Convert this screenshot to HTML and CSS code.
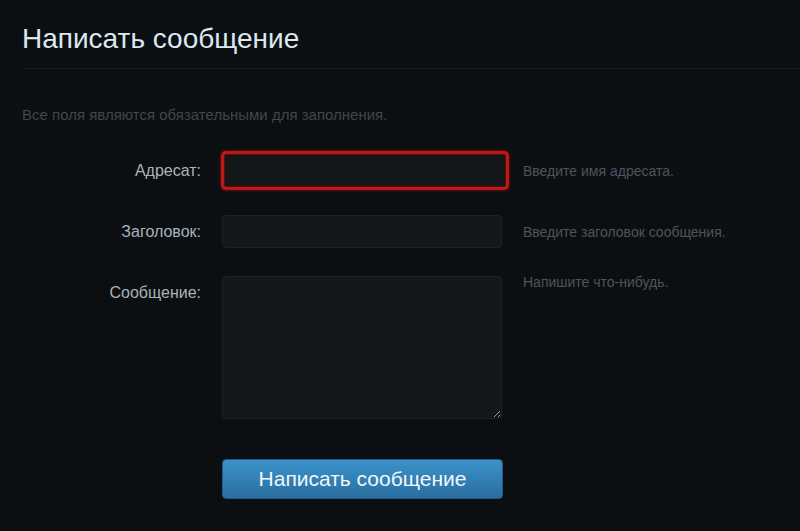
FILE: index.html
```html
<!DOCTYPE html>
<html lang="ru">
<head>
    <meta charset="UTF-8">
    <meta name="viewport" content="width=device-width, initial-scale=1.0">
    <title>Написать сообщение</title>
    <link rel="stylesheet" href="styles.css">
</head>
<body>

    <div class="page">
        <h1 class="titre">Написать сообщение</h1>

        <p class="info">Все поля являются обязательными для заполнения.</p>

        <form class="formulaire" onsubmit="return false;">
            <label class="etiquette" for="adresat">Адресат:</label>
            <input class="champ erreur" type="text" id="adresat">
            <span class="aide">Введите имя адресата.</span>

            <label class="etiquette" for="zagolovok">Заголовок:</label>
            <input class="champ" type="text" id="zagolovok">
            <span class="aide">Введите заголовок сообщения.</span>

            <label class="etiquette haut" for="soobshenie">Сообщение:</label>
            <textarea class="champ texte" id="soobshenie"></textarea>
            <span class="aide haut">Напишите что-нибудь.</span>

            <span></span>
            <button class="bouton" type="submit">Написать сообщение</button>
            <span></span>
        </form>
    </div>

</body>
</html>
```

FILE: styles.css
```css
html, body {
    margin: 0;
    background-color: #0b0f12;
}
body {
    font-family: "Liberation Sans", Arial, sans-serif;
    height: 531px;
    overflow: hidden;
}
.page {
    padding-left: 22px;
}
.titre {
    margin: 0;
    padding: 24px 0 14px;
    font-size: 28px;
    line-height: 30px;
    font-weight: normal;
    color: #dde7ef;
    border-bottom: 1px solid #161a1e;
}
.info {
    margin: 37px 0 0;
    font-size: 15px;
    line-height: 18px;
    color: #3e474f;
}
.formulaire {
    display: grid;
    grid-template-columns: 179px 280px 1fr;
    column-gap: 21px;
    row-gap: 28px;
    align-items: center;
    margin-top: 30px;
}
.etiquette {
    text-align: right;
    font-size: 16px;
    color: #a9b3bb;
}
.aide {
    font-size: 14px;
    color: #4c555d;
}
.haut {
    align-self: start;
    margin-top: -2px;
}
.etiquette.haut {
    margin-top: 8px;
}
.champ {
    box-sizing: border-box;
    width: 280px;
    height: 33px;
    margin: 0;
    padding: 6px 8px;
    background-color: #13171a;
    border: 1px solid #1d2226;
    border-radius: 4px;
    color: #c8d0d6;
    font-family: inherit;
    font-size: 14px;
}
.champ:focus {
    outline: none;
}
.erreur {
    width: 282px;
    margin-left: 2px;
    border-color: #5a0d0d;
    border-radius: 2px;
    box-shadow: 0 0 0 3px #c01818, 0 0 3px 4px rgba(200, 20, 20, 0.35);
}
.texte {
    height: 143px;
    resize: vertical;
}
.bouton {
    width: 281px;
    height: 40px;
    margin-top: 12px;
    padding: 0;
    background: linear-gradient(#3a93cb, #2a6e9f);
    border: 1px solid #1f5b86;
    border-radius: 4px;
    color: #f2f7fb;
    font-family: inherit;
    font-size: 21px;
    cursor: pointer;
}
.bouton:hover {
    background: linear-gradient(#43a0d8, #2f78ad);
}
```
